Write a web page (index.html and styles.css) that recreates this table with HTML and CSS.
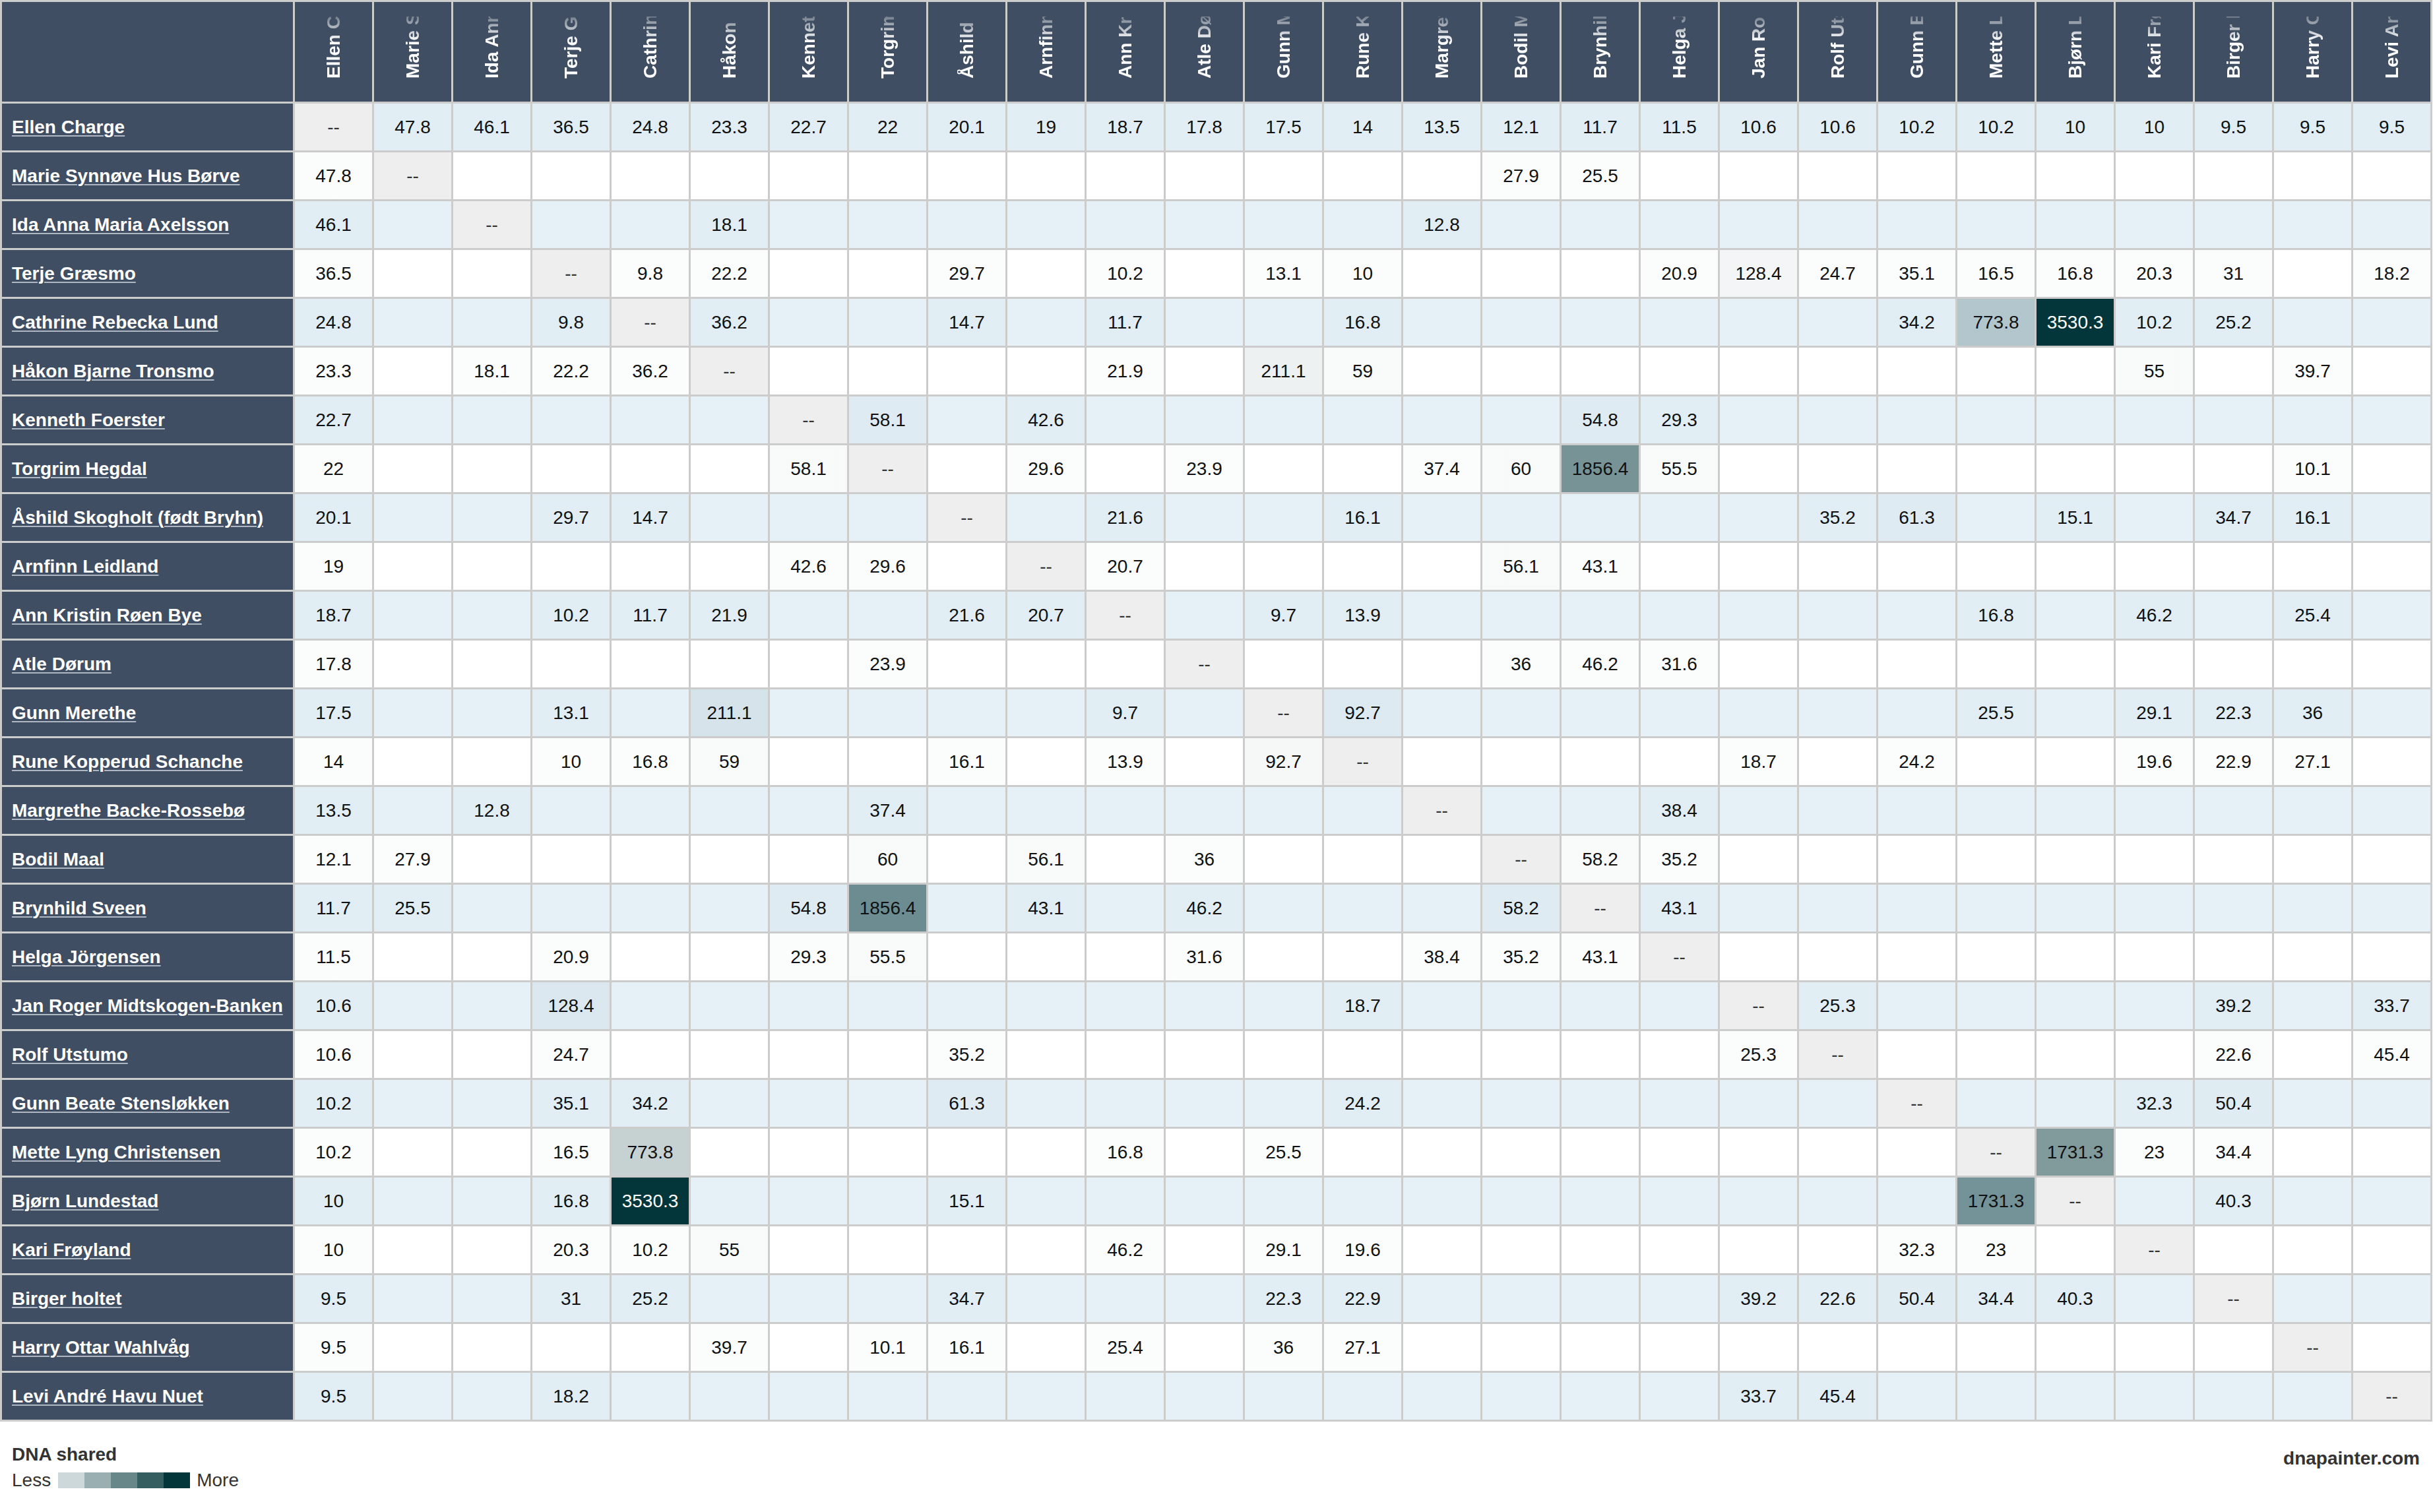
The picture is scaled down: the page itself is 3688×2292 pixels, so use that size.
FILE: index.html
```html
<!DOCTYPE html>
<html lang="nb">
<head>
<meta charset="utf-8">
<title>DNA shared matrix</title>
<link rel="stylesheet" href="styles.css">
</head>
<body>
<table class="matrix">
<colgroup><col class="c-name"><col class="c-val" span="27"></colgroup>
<thead>
<tr>
<th class="corner"></th>
<th class="h"><div class="hl">Ellen Charge</div></th>
<th class="h"><div class="hl">Marie Synnøve Hus Børve</div></th>
<th class="h"><div class="hl">Ida Anna Maria Axelsson</div></th>
<th class="h"><div class="hl">Terje Græsmo</div></th>
<th class="h"><div class="hl">Cathrine Rebecka Lund</div></th>
<th class="h"><div class="hl">Håkon Bjarne Tronsmo</div></th>
<th class="h"><div class="hl">Kenneth Foerster</div></th>
<th class="h"><div class="hl">Torgrim Hegdal</div></th>
<th class="h"><div class="hl">Åshild Skogholt (født Bryhn)</div></th>
<th class="h"><div class="hl">Arnfinn Leidland</div></th>
<th class="h"><div class="hl">Ann Kristin Røen Bye</div></th>
<th class="h"><div class="hl">Atle Dørum</div></th>
<th class="h"><div class="hl">Gunn Merethe</div></th>
<th class="h"><div class="hl">Rune Kopperud Schanche</div></th>
<th class="h"><div class="hl">Margrethe Backe-Rossebø</div></th>
<th class="h"><div class="hl">Bodil Maal</div></th>
<th class="h"><div class="hl">Brynhild Sveen</div></th>
<th class="h"><div class="hl">Helga Jörgensen</div></th>
<th class="h"><div class="hl">Jan Roger Midtskogen-Banken</div></th>
<th class="h"><div class="hl">Rolf Utstumo</div></th>
<th class="h"><div class="hl">Gunn Beate Stensløkken</div></th>
<th class="h"><div class="hl">Mette Lyng Christensen</div></th>
<th class="h"><div class="hl">Bjørn Lundestad</div></th>
<th class="h"><div class="hl">Kari Frøyland</div></th>
<th class="h"><div class="hl">Birger holtet</div></th>
<th class="h"><div class="hl">Harry Ottar Wahlvåg</div></th>
<th class="h"><div class="hl">Levi André Havu Nuet</div></th>
</tr>
</thead>
<tbody>
<tr><th class="name"><a href="#">Ellen Charge</a></th><td class="self">--</td><td class="v">47.8</td><td class="v">46.1</td><td class="v">36.5</td><td class="v">24.8</td><td class="v">23.3</td><td class="v">22.7</td><td class="v">22</td><td class="v">20.1</td><td class="v">19</td><td class="v">18.7</td><td class="v">17.8</td><td class="v">17.5</td><td class="v">14</td><td class="v">13.5</td><td class="v">12.1</td><td class="v">11.7</td><td class="v">11.5</td><td class="v">10.6</td><td class="v">10.6</td><td class="v">10.2</td><td class="v">10.2</td><td class="v">10</td><td class="v">10</td><td class="v">9.5</td><td class="v">9.5</td><td class="v">9.5</td></tr>
<tr><th class="name"><a href="#">Marie Synnøve Hus Børve</a></th><td class="v">47.8</td><td class="self">--</td><td></td><td></td><td></td><td></td><td></td><td></td><td></td><td></td><td></td><td></td><td></td><td></td><td></td><td class="v">27.9</td><td class="v">25.5</td><td></td><td></td><td></td><td></td><td></td><td></td><td></td><td></td><td></td><td></td></tr>
<tr><th class="name"><a href="#">Ida Anna Maria Axelsson</a></th><td class="v">46.1</td><td></td><td class="self">--</td><td></td><td></td><td class="v">18.1</td><td></td><td></td><td></td><td></td><td></td><td></td><td></td><td></td><td class="v">12.8</td><td></td><td></td><td></td><td></td><td></td><td></td><td></td><td></td><td></td><td></td><td></td><td></td></tr>
<tr><th class="name"><a href="#">Terje Græsmo</a></th><td class="v">36.5</td><td></td><td></td><td class="self">--</td><td class="v">9.8</td><td class="v">22.2</td><td></td><td></td><td class="v">29.7</td><td></td><td class="v">10.2</td><td></td><td class="v">13.1</td><td class="v">10</td><td></td><td></td><td></td><td class="v">20.9</td><td class="v" style="--a:.046">128.4</td><td class="v">24.7</td><td class="v">35.1</td><td class="v">16.5</td><td class="v">16.8</td><td class="v">20.3</td><td class="v">31</td><td></td><td class="v">18.2</td></tr>
<tr><th class="name"><a href="#">Cathrine Rebecka Lund</a></th><td class="v">24.8</td><td></td><td></td><td class="v">9.8</td><td class="self">--</td><td class="v">36.2</td><td></td><td></td><td class="v">14.7</td><td></td><td class="v">11.7</td><td></td><td></td><td class="v">16.8</td><td></td><td></td><td></td><td></td><td></td><td></td><td class="v">34.2</td><td class="v" style="--a:.229">773.8</td><td class="v dark" style="--a:1">3530.3</td><td class="v">10.2</td><td class="v">25.2</td><td></td><td></td></tr>
<tr><th class="name"><a href="#">Håkon Bjarne Tronsmo</a></th><td class="v">23.3</td><td></td><td class="v">18.1</td><td class="v">22.2</td><td class="v">36.2</td><td class="self">--</td><td></td><td></td><td></td><td></td><td class="v">21.9</td><td></td><td class="v" style="--a:.07">211.1</td><td class="v" style="--a:.027">59</td><td></td><td></td><td></td><td></td><td></td><td></td><td></td><td></td><td></td><td class="v" style="--a:.026">55</td><td></td><td class="v">39.7</td><td></td></tr>
<tr><th class="name"><a href="#">Kenneth Foerster</a></th><td class="v">22.7</td><td></td><td></td><td></td><td></td><td></td><td class="self">--</td><td class="v" style="--a:.026">58.1</td><td></td><td class="v">42.6</td><td></td><td></td><td></td><td></td><td></td><td></td><td class="v" style="--a:.026">54.8</td><td class="v">29.3</td><td></td><td></td><td></td><td></td><td></td><td></td><td></td><td></td><td></td></tr>
<tr><th class="name"><a href="#">Torgrim Hegdal</a></th><td class="v">22</td><td></td><td></td><td></td><td></td><td></td><td class="v" style="--a:.026">58.1</td><td class="self">--</td><td></td><td class="v">29.6</td><td></td><td class="v">23.9</td><td></td><td></td><td class="v">37.4</td><td class="v" style="--a:.027">60</td><td class="v" style="--a:.536">1856.4</td><td class="v" style="--a:.026">55.5</td><td></td><td></td><td></td><td></td><td></td><td></td><td></td><td class="v">10.1</td><td></td></tr>
<tr><th class="name"><a href="#">Åshild Skogholt (født Bryhn)</a></th><td class="v">20.1</td><td></td><td></td><td class="v">29.7</td><td class="v">14.7</td><td></td><td></td><td></td><td class="self">--</td><td></td><td class="v">21.6</td><td></td><td></td><td class="v">16.1</td><td></td><td></td><td></td><td></td><td></td><td class="v">35.2</td><td class="v" style="--a:.027">61.3</td><td></td><td class="v">15.1</td><td></td><td class="v">34.7</td><td class="v">16.1</td><td></td></tr>
<tr><th class="name"><a href="#">Arnfinn Leidland</a></th><td class="v">19</td><td></td><td></td><td></td><td></td><td></td><td class="v">42.6</td><td class="v">29.6</td><td></td><td class="self">--</td><td class="v">20.7</td><td></td><td></td><td></td><td></td><td class="v" style="--a:.026">56.1</td><td class="v">43.1</td><td></td><td></td><td></td><td></td><td></td><td></td><td></td><td></td><td></td><td></td></tr>
<tr><th class="name"><a href="#">Ann Kristin Røen Bye</a></th><td class="v">18.7</td><td></td><td></td><td class="v">10.2</td><td class="v">11.7</td><td class="v">21.9</td><td></td><td></td><td class="v">21.6</td><td class="v">20.7</td><td class="self">--</td><td></td><td class="v">9.7</td><td class="v">13.9</td><td></td><td></td><td></td><td></td><td></td><td></td><td></td><td class="v">16.8</td><td></td><td class="v">46.2</td><td></td><td class="v">25.4</td><td></td></tr>
<tr><th class="name"><a href="#">Atle Dørum</a></th><td class="v">17.8</td><td></td><td></td><td></td><td></td><td></td><td></td><td class="v">23.9</td><td></td><td></td><td></td><td class="self">--</td><td></td><td></td><td></td><td class="v">36</td><td class="v">46.2</td><td class="v">31.6</td><td></td><td></td><td></td><td></td><td></td><td></td><td></td><td></td><td></td></tr>
<tr><th class="name"><a href="#">Gunn Merethe</a></th><td class="v">17.5</td><td></td><td></td><td class="v">13.1</td><td></td><td class="v" style="--a:.07">211.1</td><td></td><td></td><td></td><td></td><td class="v">9.7</td><td></td><td class="self">--</td><td class="v" style="--a:.036">92.7</td><td></td><td></td><td></td><td></td><td></td><td></td><td></td><td class="v">25.5</td><td></td><td class="v">29.1</td><td class="v">22.3</td><td class="v">36</td><td></td></tr>
<tr><th class="name"><a href="#">Rune Kopperud Schanche</a></th><td class="v">14</td><td></td><td></td><td class="v">10</td><td class="v">16.8</td><td class="v" style="--a:.027">59</td><td></td><td></td><td class="v">16.1</td><td></td><td class="v">13.9</td><td></td><td class="v" style="--a:.036">92.7</td><td class="self">--</td><td></td><td></td><td></td><td></td><td class="v">18.7</td><td></td><td class="v">24.2</td><td></td><td></td><td class="v">19.6</td><td class="v">22.9</td><td class="v">27.1</td><td></td></tr>
<tr><th class="name"><a href="#">Margrethe Backe-Rossebø</a></th><td class="v">13.5</td><td></td><td class="v">12.8</td><td></td><td></td><td></td><td></td><td class="v">37.4</td><td></td><td></td><td></td><td></td><td></td><td></td><td class="self">--</td><td></td><td></td><td class="v">38.4</td><td></td><td></td><td></td><td></td><td></td><td></td><td></td><td></td><td></td></tr>
<tr><th class="name"><a href="#">Bodil Maal</a></th><td class="v">12.1</td><td class="v">27.9</td><td></td><td></td><td></td><td></td><td></td><td class="v" style="--a:.027">60</td><td></td><td class="v" style="--a:.026">56.1</td><td></td><td class="v">36</td><td></td><td></td><td></td><td class="self">--</td><td class="v" style="--a:.026">58.2</td><td class="v">35.2</td><td></td><td></td><td></td><td></td><td></td><td></td><td></td><td></td><td></td></tr>
<tr><th class="name"><a href="#">Brynhild Sveen</a></th><td class="v">11.7</td><td class="v">25.5</td><td></td><td></td><td></td><td></td><td class="v" style="--a:.026">54.8</td><td class="v" style="--a:.536">1856.4</td><td></td><td class="v">43.1</td><td></td><td class="v">46.2</td><td></td><td></td><td></td><td class="v" style="--a:.026">58.2</td><td class="self">--</td><td class="v">43.1</td><td></td><td></td><td></td><td></td><td></td><td></td><td></td><td></td><td></td></tr>
<tr><th class="name"><a href="#">Helga Jörgensen</a></th><td class="v">11.5</td><td></td><td></td><td class="v">20.9</td><td></td><td></td><td class="v">29.3</td><td class="v" style="--a:.026">55.5</td><td></td><td></td><td></td><td class="v">31.6</td><td></td><td></td><td class="v">38.4</td><td class="v">35.2</td><td class="v">43.1</td><td class="self">--</td><td></td><td></td><td></td><td></td><td></td><td></td><td></td><td></td><td></td></tr>
<tr><th class="name"><a href="#">Jan Roger Midtskogen-Banken</a></th><td class="v">10.6</td><td></td><td></td><td class="v" style="--a:.046">128.4</td><td></td><td></td><td></td><td></td><td></td><td></td><td></td><td></td><td></td><td class="v">18.7</td><td></td><td></td><td></td><td></td><td class="self">--</td><td class="v">25.3</td><td></td><td></td><td></td><td></td><td class="v">39.2</td><td></td><td class="v">33.7</td></tr>
<tr><th class="name"><a href="#">Rolf Utstumo</a></th><td class="v">10.6</td><td></td><td></td><td class="v">24.7</td><td></td><td></td><td></td><td></td><td class="v">35.2</td><td></td><td></td><td></td><td></td><td></td><td></td><td></td><td></td><td></td><td class="v">25.3</td><td class="self">--</td><td></td><td></td><td></td><td></td><td class="v">22.6</td><td></td><td class="v">45.4</td></tr>
<tr><th class="name"><a href="#">Gunn Beate Stensløkken</a></th><td class="v">10.2</td><td></td><td></td><td class="v">35.1</td><td class="v">34.2</td><td></td><td></td><td></td><td class="v" style="--a:.027">61.3</td><td></td><td></td><td></td><td></td><td class="v">24.2</td><td></td><td></td><td></td><td></td><td></td><td></td><td class="self">--</td><td></td><td></td><td class="v">32.3</td><td class="v" style="--a:.024">50.4</td><td></td><td></td></tr>
<tr><th class="name"><a href="#">Mette Lyng Christensen</a></th><td class="v">10.2</td><td></td><td></td><td class="v">16.5</td><td class="v" style="--a:.229">773.8</td><td></td><td></td><td></td><td></td><td></td><td class="v">16.8</td><td></td><td class="v">25.5</td><td></td><td></td><td></td><td></td><td></td><td></td><td></td><td></td><td class="self">--</td><td class="v" style="--a:.5">1731.3</td><td class="v">23</td><td class="v">34.4</td><td></td><td></td></tr>
<tr><th class="name"><a href="#">Bjørn Lundestad</a></th><td class="v">10</td><td></td><td></td><td class="v">16.8</td><td class="v dark" style="--a:1">3530.3</td><td></td><td></td><td></td><td class="v">15.1</td><td></td><td></td><td></td><td></td><td></td><td></td><td></td><td></td><td></td><td></td><td></td><td></td><td class="v" style="--a:.5">1731.3</td><td class="self">--</td><td></td><td class="v">40.3</td><td></td><td></td></tr>
<tr><th class="name"><a href="#">Kari Frøyland</a></th><td class="v">10</td><td></td><td></td><td class="v">20.3</td><td class="v">10.2</td><td class="v" style="--a:.026">55</td><td></td><td></td><td></td><td></td><td class="v">46.2</td><td></td><td class="v">29.1</td><td class="v">19.6</td><td></td><td></td><td></td><td></td><td></td><td></td><td class="v">32.3</td><td class="v">23</td><td></td><td class="self">--</td><td></td><td></td><td></td></tr>
<tr><th class="name"><a href="#">Birger holtet</a></th><td class="v">9.5</td><td></td><td></td><td class="v">31</td><td class="v">25.2</td><td></td><td></td><td></td><td class="v">34.7</td><td></td><td></td><td></td><td class="v">22.3</td><td class="v">22.9</td><td></td><td></td><td></td><td></td><td class="v">39.2</td><td class="v">22.6</td><td class="v" style="--a:.024">50.4</td><td class="v">34.4</td><td class="v">40.3</td><td></td><td class="self">--</td><td></td><td></td></tr>
<tr><th class="name"><a href="#">Harry Ottar Wahlvåg</a></th><td class="v">9.5</td><td></td><td></td><td></td><td></td><td class="v">39.7</td><td></td><td class="v">10.1</td><td class="v">16.1</td><td></td><td class="v">25.4</td><td></td><td class="v">36</td><td class="v">27.1</td><td></td><td></td><td></td><td></td><td></td><td></td><td></td><td></td><td></td><td></td><td></td><td class="self">--</td><td></td></tr>
<tr><th class="name"><a href="#">Levi André Havu Nuet</a></th><td class="v">9.5</td><td></td><td></td><td class="v">18.2</td><td></td><td></td><td></td><td></td><td></td><td></td><td></td><td></td><td></td><td></td><td></td><td></td><td></td><td></td><td class="v">33.7</td><td class="v">45.4</td><td></td><td></td><td></td><td></td><td></td><td></td><td class="self">--</td></tr>
</tbody>
</table>
<footer class="foot">
<div class="legend">
<div class="legend-title">DNA shared</div>
<div class="scale">
<span class="scale-label">Less</span>
<span class="swatches"><span class="sw sw1"></span><span class="sw sw2"></span><span class="sw sw3"></span><span class="sw sw4"></span><span class="sw sw5"></span></span>
<span class="scale-label">More</span>
</div>
</div>
<div class="brand">dnapainter.com</div>
</footer>
</body>
</html>
```

FILE: styles.css
```css
html, body {
  margin: 0;
  padding: 0;
  background: #ffffff;
}

body {
  font-family: "Liberation Sans", Arial, sans-serif;
  color: #333333;
}

.matrix {
  table-layout: fixed;
  width: 3687px;
  border-collapse: separate;
  border-spacing: 3px;
  background: #cccccc;
  font-family: "Liberation Sans", Arial, sans-serif;
}

.c-name { width: 441px; }
.c-val { width: 117px; }

.matrix thead th {
  height: 151px;
  padding: 0;
  background: #3f4e62;
}

.matrix th.h {
  vertical-align: bottom;
  padding-bottom: 35px;
  height: 116px;
}

.hl {
  writing-mode: vertical-rl;
  transform: rotate(180deg);
  width: 30px;
  height: 94px;
  margin: 0 auto;
  overflow: hidden;
  white-space: nowrap;
  font-size: 28px;
  font-weight: bold;
  line-height: 30px;
  color: #ffffff;
  text-align: start;
  -webkit-mask-image: linear-gradient(to bottom, #000 60%, rgba(0, 0, 0, .28) 100%);
  mask-image: linear-gradient(to bottom, #000 60%, rgba(0, 0, 0, .28) 100%);
}

.matrix tbody tr:nth-child(odd) { background: #e5f0f7; }
.matrix tbody tr:nth-child(even) { background: #ffffff; }

.matrix tbody th.name {
  height: 71px;
  padding: 0 0 0 15px;
  text-align: left;
  background: #3f4e62;
  white-space: nowrap;
  overflow: hidden;
}

.name a {
  font-size: 28px;
  font-weight: bold;
  color: #ffffff;
  text-decoration: underline;
  text-decoration-color: #aeb7c2;
  text-decoration-thickness: 2px;
  text-underline-offset: 3px;
}

.matrix td {
  height: 71px;
  padding: 0;
  text-align: center;
  vertical-align: middle;
  font-size: 28px;
  color: #111111;
  white-space: nowrap;
}

.matrix td.v {
  --a: .015;
  background-image: linear-gradient(rgba(3, 54, 58, var(--a)), rgba(3, 54, 58, var(--a)));
}

.matrix td.dark { color: #ffffff; }

.matrix td.self {
  background: #eeeeee;
  color: #333333;
}

.foot {
  display: flex;
  justify-content: space-between;
  align-items: flex-start;
  padding: 34px 20px 0 18px;
}

.legend-title {
  font-size: 28px;
  font-weight: bold;
  line-height: 32px;
  color: #333333;
}

.scale {
  display: flex;
  align-items: center;
  margin-top: 7px;
  font-size: 28px;
  line-height: 32px;
  color: #333333;
}

.swatches {
  display: flex;
  margin: 0 10px 0 11px;
}

.sw {
  display: block;
  width: 40px;
  height: 24px;
}

.sw1 { background: #ccd8d9; }
.sw2 { background: #9aafb1; }
.sw3 { background: #688789; }
.sw4 { background: #355e60; }
.sw5 { background: #03363a; }

.brand {
  margin-top: 6px;
  font-size: 28px;
  font-weight: bold;
  line-height: 32px;
  color: #333333;
}
```
